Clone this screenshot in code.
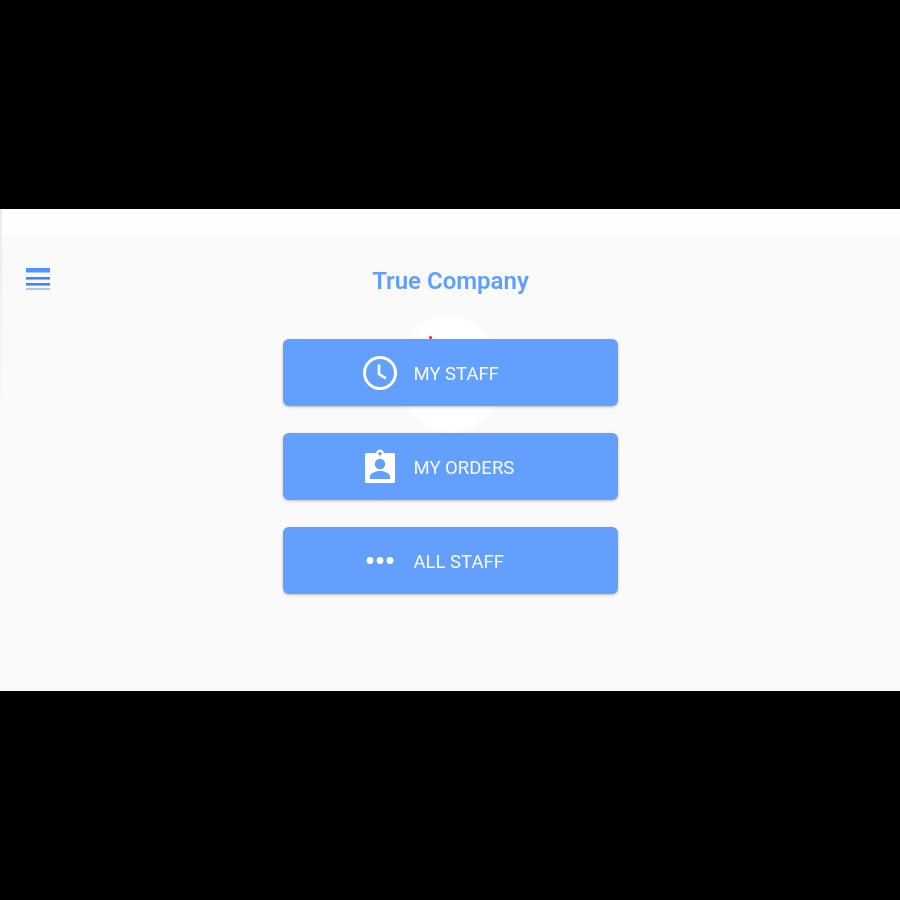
<style>
  :global(body) { margin: 0; background: #000; }
  .page { width: 900px; height: 900px; background: #000; padding-top: 209px; box-sizing: border-box; overflow: hidden; }
  .screen { position: relative; height: 482px; background: #fafafa; display: flex; flex-direction: column; font-family: Roboto, sans-serif; overflow: hidden; }
  .status { height: 29px; background: linear-gradient(#fefefe 80%, #fafafa); flex: none; }
  .edge { position: absolute; left: 0; top: 0; height: 230px; width: 2px; background: linear-gradient(#ececec, #fafafa); filter: blur(0.6px); }
  .header { height: 78px; flex: none; display: flex; align-items: center; justify-content: center; position: relative; padding-top: 7px; box-sizing: border-box; }
  .menu { position: absolute; left: 26px; top: 30px; width: 24px; height: 23px; filter: blur(0.5px); }
  h1 { margin: 0; font-size: 24px; font-weight: 600; color: #5f9fff; line-height: 28px; padding-left: 1px; filter: blur(0.4px); }
  .blob { position: absolute; left: 399px; top: 107px; width: 103px; height: 116px; border-radius: 50%; background: #fff; filter: blur(3px); }
  .dot { position: absolute; left: 429px; top: 127px; width: 3px; height: 3px; border-radius: 50%; background: #e8203f; filter: blur(0.4px); }
  .list { position: relative; display: flex; flex-direction: column; gap: 27px; align-items: center; padding-left: 1px; padding-top: 23px; }
  .btn { width: 335px; height: 67px; border-radius: 6px; background: #629fff; box-shadow: 0 1px 3px rgba(0,0,0,.25); display: flex; align-items: center; color: #fff; box-sizing: border-box; padding-left: 78px; }
  .icon { width: 38px; height: 38px; flex: none; margin-right: 14.5px; filter: blur(0.4px); }
  .label { font-size: 18.5px; line-height: 24px; padding-top: 2px; filter: blur(0.45px); opacity: .96; }
</style>

<div class="page">
  <div class="screen">
    <div class="status"></div>
    <div class="edge"></div>
    <div class="header">
      <svg class="menu" viewBox="0 0 24 23" aria-hidden="true">
        <rect x="0" y="0" width="24" height="4.5" fill="#4f94fb"/>
        <rect x="0" y="9" width="24" height="2.6" fill="#3d88f8"/>
        <rect x="0" y="15" width="24" height="2.6" fill="#3d88f8"/>
        <rect x="0" y="20" width="24" height="2" fill="#a9c8fa"/>
      </svg>
      <h1>True Company</h1>
    </div>
    <div class="blob"></div>
    <div class="dot"></div>
    <div class="list">
      <div class="btn">
        <svg class="icon" viewBox="0 0 38 38" aria-hidden="true">
          <circle cx="19" cy="19" r="15.500" fill="none" stroke="#fff" stroke-width="3"/>
          <path d="M18 10.500V20l6.800 4.400" fill="none" stroke="#fff" stroke-width="2.600"/>
        </svg>
        <span class="label">MY STAFF</span>
      </div>
      <div class="btn">
        <svg class="icon" viewBox="0 0 38 38" aria-hidden="true">
          <path fill="#fff" fill-rule="evenodd" d="M5.500 5h9.500C15.500 3 17 1.500 19 1.500S22.500 3 23 5h9.500a1.500 1.500 0 0 1 1.500 1.500v27a1.500 1.500 0 0 1-1.500 1.500h-27A1.500 1.500 0 0 1 4 33.500v-27A1.500 1.500 0 0 1 5.500 5ZM19 4a1.800 1.800 0 1 0 0 3.600A1.800 1.800 0 0 0 19 4Z"/>
          <circle cx="19" cy="16" r="5.200" fill="#629fff"/>
          <path fill="#629fff" d="M9 31v-2.500c0-3.800 6.500-5.600 10-5.600s10 1.800 10 5.600V31Z"/>
        </svg>
        <span class="label">MY ORDERS</span>
      </div>
      <div class="btn">
        <svg class="icon" viewBox="0 0 38 38" aria-hidden="true">
          <circle cx="9" cy="18.500" r="3.400" fill="#fff"/>
          <circle cx="19" cy="18.500" r="3.400" fill="#fff"/>
          <circle cx="29" cy="18.500" r="3.400" fill="#fff"/>
        </svg>
        <span class="label">ALL STAFF</span>
      </div>
    </div>
  </div>
</div>
